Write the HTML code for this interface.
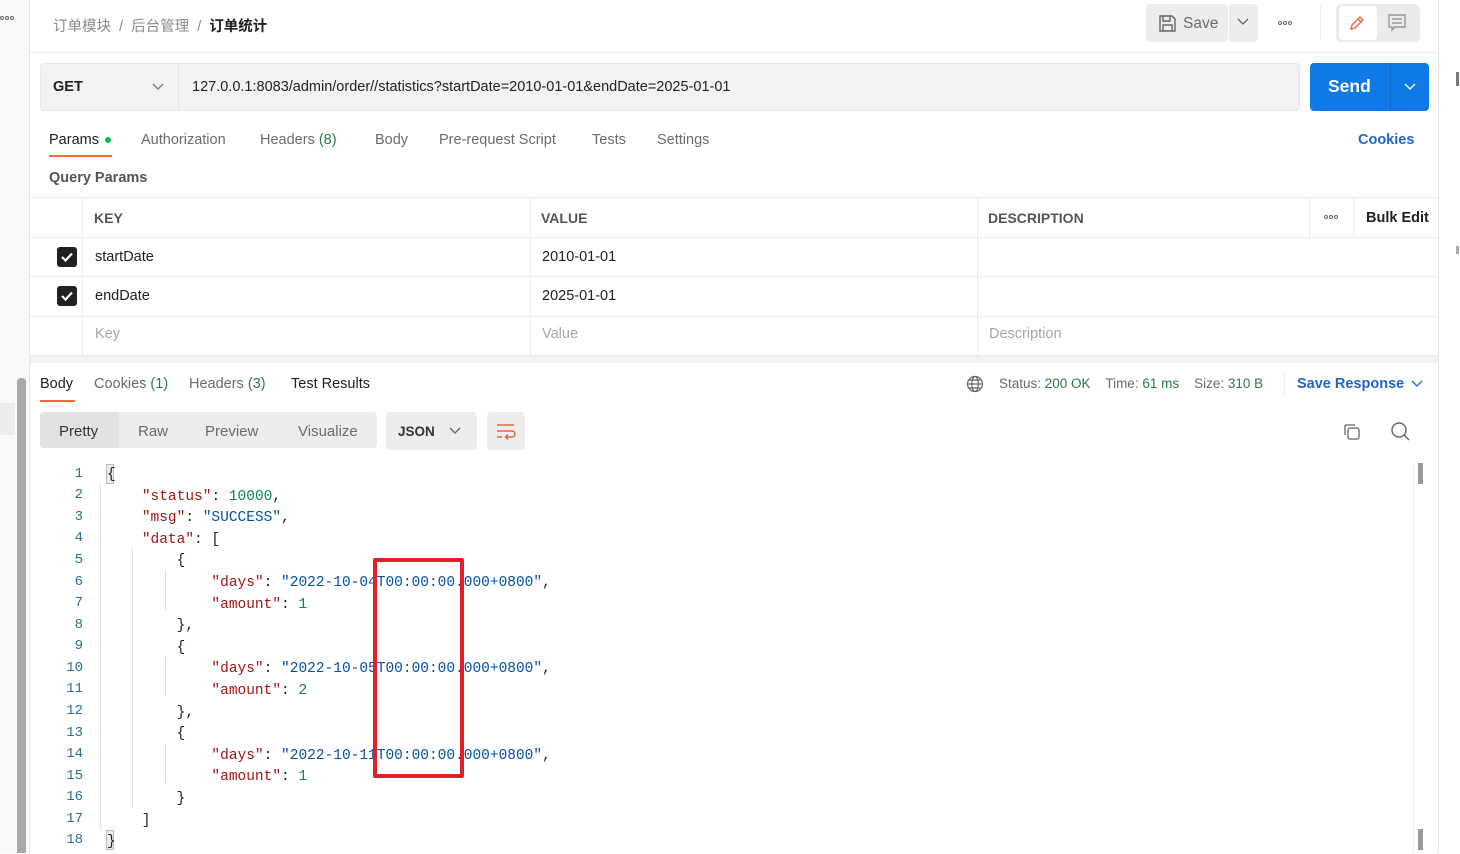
<!DOCTYPE html>
<html><head><meta charset="utf-8"><style>
*{margin:0;padding:0;box-sizing:border-box}
body{width:1460px;height:853px;overflow:hidden;background:#fff;font-family:"Liberation Sans","Noto Sans CJK SC",sans-serif;color:#212121;position:relative;font-size:14.5px}
.a{position:absolute}
.mono{font-family:"Liberation Mono",monospace;font-size:14.5px;white-space:pre}
.k{color:#a31515}.s{color:#0451a5}.n{color:#098658}
.ln{position:absolute;left:40px;width:43px;text-align:right;color:#2a6f96;font-family:"Liberation Mono",monospace;font-size:14px}
.tab{position:absolute;top:132px;color:#6b6b6b;font-size:14.5px}
.g{color:#2d7a45}
.dots{position:absolute;display:flex;gap:1px}
.dots i{width:4px;height:4px;border:1px solid #666;border-radius:50%;display:block}
</style></head><body>
<div class="a" style="left:0;top:0;width:30px;height:853px;background:#f9f9f9;border-right:1px solid #e6e6e6"></div>
<div class="dots" style="left:0;top:16px"><i></i><i></i><i></i></div>
<div class="a" style="left:0;top:403px;width:15px;height:32px;background:#ececec"></div>
<div class="a" style="left:17px;top:378px;width:9px;height:475px;background:#a8a8a8;border-radius:4px 4px 0 0"></div>
<div class="a" style="left:1438px;top:0;width:1px;height:853px;background:#e6e6e6"></div>
<div class="a" style="left:1456px;top:72px;width:3px;height:14px;background:#777"></div>
<div class="a" style="left:1456px;top:246px;width:3px;height:8px;background:#aaa"></div>
<div class="a" style="left:53px;top:15px;font-size:14.5px;color:#8a8a8a">订单模块 &nbsp;/&nbsp; 后台管理 &nbsp;/&nbsp; <span style="color:#212121;font-weight:bold">订单统计</span></div>
<div class="a" style="left:1146px;top:4px;width:82px;height:38px;background:#ededed;border-radius:4px"></div>
<svg class="a" style="left:1158px;top:14px" width="19" height="19" viewBox="0 0 19 19" fill="none" stroke="#666" stroke-width="1.4"><path d="M2 2h12l3 3v12H2z"/><path d="M5 2v5h7V2M5 17v-6h9v6"/></svg>
<div class="a" style="left:1183px;top:15px;font-size:15.5px;color:#6b6b6b">Save</div>
<div class="a" style="left:1229px;top:4px;width:29px;height:38px;background:#ededed;border-radius:4px"></div>
<svg class="a" style="left:1237px;top:17px" width="12" height="10"><path d="M1 2l5 5 5-5" stroke="#666" fill="none" stroke-width="1.3"/></svg>
<div class="dots" style="left:1278px;top:21px"><i></i><i></i><i></i></div>
<div class="a" style="left:1320px;top:5px;width:1px;height:36px;background:#eee"></div>
<div class="a" style="left:1336px;top:4px;width:84px;height:38px;background:#ebebeb;border-radius:5px"></div>
<div class="a" style="left:1339px;top:6px;width:38px;height:34px;background:#fff;border-radius:4px"></div>
<svg class="a" style="left:1348px;top:14px" width="18" height="18" fill="none" stroke="#e8663d" stroke-width="1.4"><path d="M3 15l1-4 8-8 3 3-8 8zM10 5l3 3"/></svg>
<svg class="a" style="left:1387px;top:13px" width="20" height="20" fill="none" stroke="#999" stroke-width="1.4"><path d="M2 2h16v12H8l-3 3v-3H2z M5 6h10M5 10h10"/></svg>
<div class="a" style="left:30px;top:52px;width:1408px;height:1px;background:#ebebeb"></div>
<div class="a" style="left:40px;top:63px;width:1260px;height:48px;background:#f2f2f2;border:1px solid #e6e6e6;border-radius:4px"></div>
<div class="a" style="left:178px;top:64px;width:1px;height:46px;background:#e2e2e2"></div>
<div class="a" style="left:53px;top:79px;font-weight:bold;font-size:14.5px">GET</div>
<svg class="a" style="left:152px;top:82px" width="12" height="10"><path d="M1 2l5 5 5-5" stroke="#777" fill="none" stroke-width="1.3"/></svg>
<div class="a" style="left:192px;top:79px;font-size:14.5px">127.0.0.1:8083/admin/order//statistics?startDate=2010-01-01&amp;endDate=2025-01-01</div>
<div class="a" style="left:1310px;top:63px;width:119px;height:48px;background:#0f7ae5;border-radius:4px"></div>
<div class="a" style="left:1390px;top:63px;width:1px;height:48px;background:#0a68c6"></div>
<div class="a" style="left:1328px;top:76px;color:#fff;font-weight:bold;font-size:17.5px">Send</div>
<svg class="a" style="left:1404px;top:82px" width="12" height="10"><path d="M1 2l5 5 5-5" stroke="#fff" fill="none" stroke-width="1.4"/></svg>
<div class="tab" style="left:49px;color:#212121">Params</div>
<div class="a" style="left:105px;top:137px;width:6px;height:6px;border-radius:50%;background:#0cbb52"></div>
<div class="a" style="left:49px;top:155px;width:63px;height:2px;background:#f26b3a"></div>
<div class="tab" style="left:141px">Authorization</div>
<div class="tab" style="left:260px">Headers <span class="g">(8)</span></div>
<div class="tab" style="left:375px">Body</div>
<div class="tab" style="left:439px">Pre-request Script</div>
<div class="tab" style="left:592px">Tests</div>
<div class="tab" style="left:657px">Settings</div>
<div class="a" style="left:1358px;top:132px;color:#1e66c7;font-weight:bold;font-size:14.5px">Cookies</div>
<div class="a" style="left:49px;top:170px;color:#555;font-weight:bold;font-size:14.5px">Query Params</div>
<div class="a" style="left:30px;top:197px;width:1408px;height:159px;border-top:1px solid #ebebeb"></div>
<div class="a" style="left:30px;top:237px;width:1408px;height:1px;background:#ebebeb"></div>
<div class="a" style="left:30px;top:276px;width:1408px;height:1px;background:#ebebeb"></div>
<div class="a" style="left:30px;top:316px;width:1408px;height:1px;background:#ebebeb"></div>
<div class="a" style="left:30px;top:355px;width:1408px;height:1px;background:#ebebeb"></div>
<div class="a" style="left:82px;top:198px;width:1px;height:157px;background:#ebebeb"></div>
<div class="a" style="left:530px;top:198px;width:1px;height:157px;background:#ebebeb"></div>
<div class="a" style="left:977px;top:198px;width:1px;height:157px;background:#ebebeb"></div>
<div class="a" style="left:1309px;top:198px;width:1px;height:39px;background:#ebebeb"></div>
<div class="a" style="left:1353px;top:198px;width:1px;height:39px;background:#ebebeb"></div>
<div class="a" style="left:94px;top:210px;color:#555;font-weight:bold;font-size:14px">KEY</div>
<div class="a" style="left:541px;top:210px;color:#555;font-weight:bold;font-size:14px">VALUE</div>
<div class="a" style="left:988px;top:210px;color:#555;font-weight:bold;font-size:14px">DESCRIPTION</div>
<div class="dots" style="left:1324px;top:215px"><i></i><i></i><i></i></div>
<div class="a" style="left:1366px;top:210px;font-weight:bold;font-size:14.5px">Bulk Edit</div>
<div class="a" style="left:57px;top:247px;width:20px;height:20px;background:#212121;border-radius:3px"></div>
<svg class="a" style="left:57px;top:247px" width="20" height="20"><path d="M5 10l3.5 3.5L15 6.5" stroke="#fff" stroke-width="2.2" fill="none"/></svg>
<div class="a" style="left:57px;top:286px;width:20px;height:20px;background:#212121;border-radius:3px"></div>
<svg class="a" style="left:57px;top:286px" width="20" height="20"><path d="M5 10l3.5 3.5L15 6.5" stroke="#fff" stroke-width="2.2" fill="none"/></svg>
<div class="a" style="left:95px;top:249px">startDate</div>
<div class="a" style="left:542px;top:249px">2010-01-01</div>
<div class="a" style="left:95px;top:288px">endDate</div>
<div class="a" style="left:542px;top:288px">2025-01-01</div>
<div class="a" style="left:95px;top:326px;color:#a6a6a6">Key</div>
<div class="a" style="left:542px;top:326px;color:#a6a6a6">Value</div>
<div class="a" style="left:989px;top:326px;color:#a6a6a6">Description</div>
<div class="a" style="left:30px;top:356px;width:1408px;height:7px;background:#f2f2f2"></div>
<div class="a" style="left:40px;top:376px;color:#212121">Body</div>
<div class="a" style="left:40px;top:400px;width:35px;height:2px;background:#f26b3a"></div>
<div class="a" style="left:94px;top:376px;color:#6b6b6b">Cookies <span class="g">(1)</span></div>
<div class="a" style="left:189px;top:376px;color:#6b6b6b">Headers <span class="g">(3)</span></div>
<div class="a" style="left:291px;top:376px;color:#212121">Test Results</div>
<svg class="a" style="left:966px;top:375px" width="18" height="18" fill="none" stroke="#666" stroke-width="1.2"><circle cx="9" cy="9" r="7.5"/><ellipse cx="9" cy="9" rx="3.3" ry="7.5"/><path d="M1.5 9h15M3 5h12M3 13h12"/></svg>
<div class="a" style="left:999px;top:376px;font-size:13.5px;color:#6b6b6b;white-space:pre">Status: <span class="g">200 OK</span>    Time: <span class="g">61 ms</span>    Size: <span class="g">310 B</span></div>
<div class="a" style="left:1284px;top:372px;width:1px;height:24px;background:#eee"></div>
<div class="a" style="left:1297px;top:376px;color:#1e66c7;font-weight:bold;font-size:14.5px">Save Response</div>
<svg class="a" style="left:1411px;top:379px" width="12" height="10"><path d="M1 2l5 5 5-5" stroke="#1e66c7" fill="none" stroke-width="1.3"/></svg>
<div class="a" style="left:40px;top:412px;width:337px;height:36px;background:#ededed;border-radius:4px"></div>
<div class="a" style="left:40px;top:412px;width:79px;height:36px;background:#e2e2e2;border-radius:4px 0 0 4px"></div>
<div class="a" style="left:59px;top:423px;color:#333;font-size:15px">Pretty</div>
<div class="a" style="left:138px;top:423px;color:#6b6b6b;font-size:15px">Raw</div>
<div class="a" style="left:205px;top:423px;color:#6b6b6b;font-size:15px">Preview</div>
<div class="a" style="left:298px;top:423px;color:#6b6b6b;font-size:15px">Visualize</div>
<div class="a" style="left:386px;top:412px;width:91px;height:38px;background:#ededed;border-radius:4px"></div>
<div class="a" style="left:398px;top:424px;color:#333;font-weight:bold;font-size:13.5px">JSON</div>
<svg class="a" style="left:449px;top:426px" width="12" height="10"><path d="M1 2l5 5 5-5" stroke="#666" fill="none" stroke-width="1.3"/></svg>
<div class="a" style="left:487px;top:412px;width:38px;height:38px;background:#ededed;border-radius:4px"></div>
<svg class="a" style="left:495px;top:421px" width="22" height="20" fill="none" stroke="#e8663d" stroke-width="1.5"><path d="M2 4h17M2 10h15a3 3 0 0 1 0 6h-6M13 13.5l-2.5 2.5 2.5 2.5M2 16h5"/></svg>
<svg class="a" style="left:1342px;top:422px" width="20" height="20" fill="none" stroke="#666" stroke-width="1.3"><rect x="6" y="6" width="11" height="11" rx="2"/><path d="M3 13V4a1 1 0 0 1 1-1h9"/></svg>
<svg class="a" style="left:1390px;top:421px" width="21" height="21" fill="none" stroke="#666" stroke-width="1.4"><circle cx="9" cy="9" r="7"/><path d="M14 14l5 5"/></svg>
<div class="a" style="left:1413px;top:463px;width:1px;height:390px;background:#eee"></div>
<div class="a" style="left:1418px;top:463px;width:5px;height:21px;background:#999"></div>
<div class="a" style="left:1418px;top:829px;width:5px;height:21px;background:#999"></div>
<div class="ln" style="top:466px">1</div><div class="ln" style="top:487px">2</div><div class="ln" style="top:509px">3</div><div class="ln" style="top:530px">4</div><div class="ln" style="top:552px">5</div><div class="ln" style="top:574px">6</div><div class="ln" style="top:595px">7</div><div class="ln" style="top:617px">8</div><div class="ln" style="top:638px">9</div><div class="ln" style="top:660px">10</div><div class="ln" style="top:681px">11</div><div class="ln" style="top:703px">12</div><div class="ln" style="top:725px">13</div><div class="ln" style="top:746px">14</div><div class="ln" style="top:768px">15</div><div class="ln" style="top:789px">16</div><div class="ln" style="top:811px">17</div><div class="ln" style="top:832px">18</div>
<div class="a" style="left:100px;top:484px;width:1px;height:345px;background:#ddd"></div>
<div class="a" style="left:132px;top:549px;width:1px;height:258px;background:#ddd"></div>
<div class="a" style="left:165px;top:570px;width:1px;height:40px;background:#ddd"></div>
<div class="a" style="left:165px;top:657px;width:1px;height:40px;background:#ddd"></div>
<div class="a" style="left:165px;top:743px;width:1px;height:40px;background:#ddd"></div>
<div class="a" style="left:106px;top:464px;width:8px;height:20px;border:1px solid #bbb;background:#eef0e8"></div>
<div class="a" style="left:106px;top:830px;width:8px;height:20px;border:1px solid #bbb;background:#eef0e8"></div>
<div class="a mono" style="left:107px;top:465px;line-height:21.6px">{
    <span class="k">"status"</span>: <span class="n">10000</span>,
    <span class="k">"msg"</span>: <span class="s">"SUCCESS"</span>,
    <span class="k">"data"</span>: [
        {
            <span class="k">"days"</span>: <span class="s">"2022-10-04T00:00:00.000+0800"</span>,
            <span class="k">"amount"</span>: <span class="n">1</span>
        },
        {
            <span class="k">"days"</span>: <span class="s">"2022-10-05T00:00:00.000+0800"</span>,
            <span class="k">"amount"</span>: <span class="n">2</span>
        },
        {
            <span class="k">"days"</span>: <span class="s">"2022-10-11T00:00:00.000+0800"</span>,
            <span class="k">"amount"</span>: <span class="n">1</span>
        }
    ]
}</div>
<div class="a" style="left:373px;top:558px;width:91px;height:220px;border:4px solid #e3202a;border-radius:2px"></div>
</body></html>
